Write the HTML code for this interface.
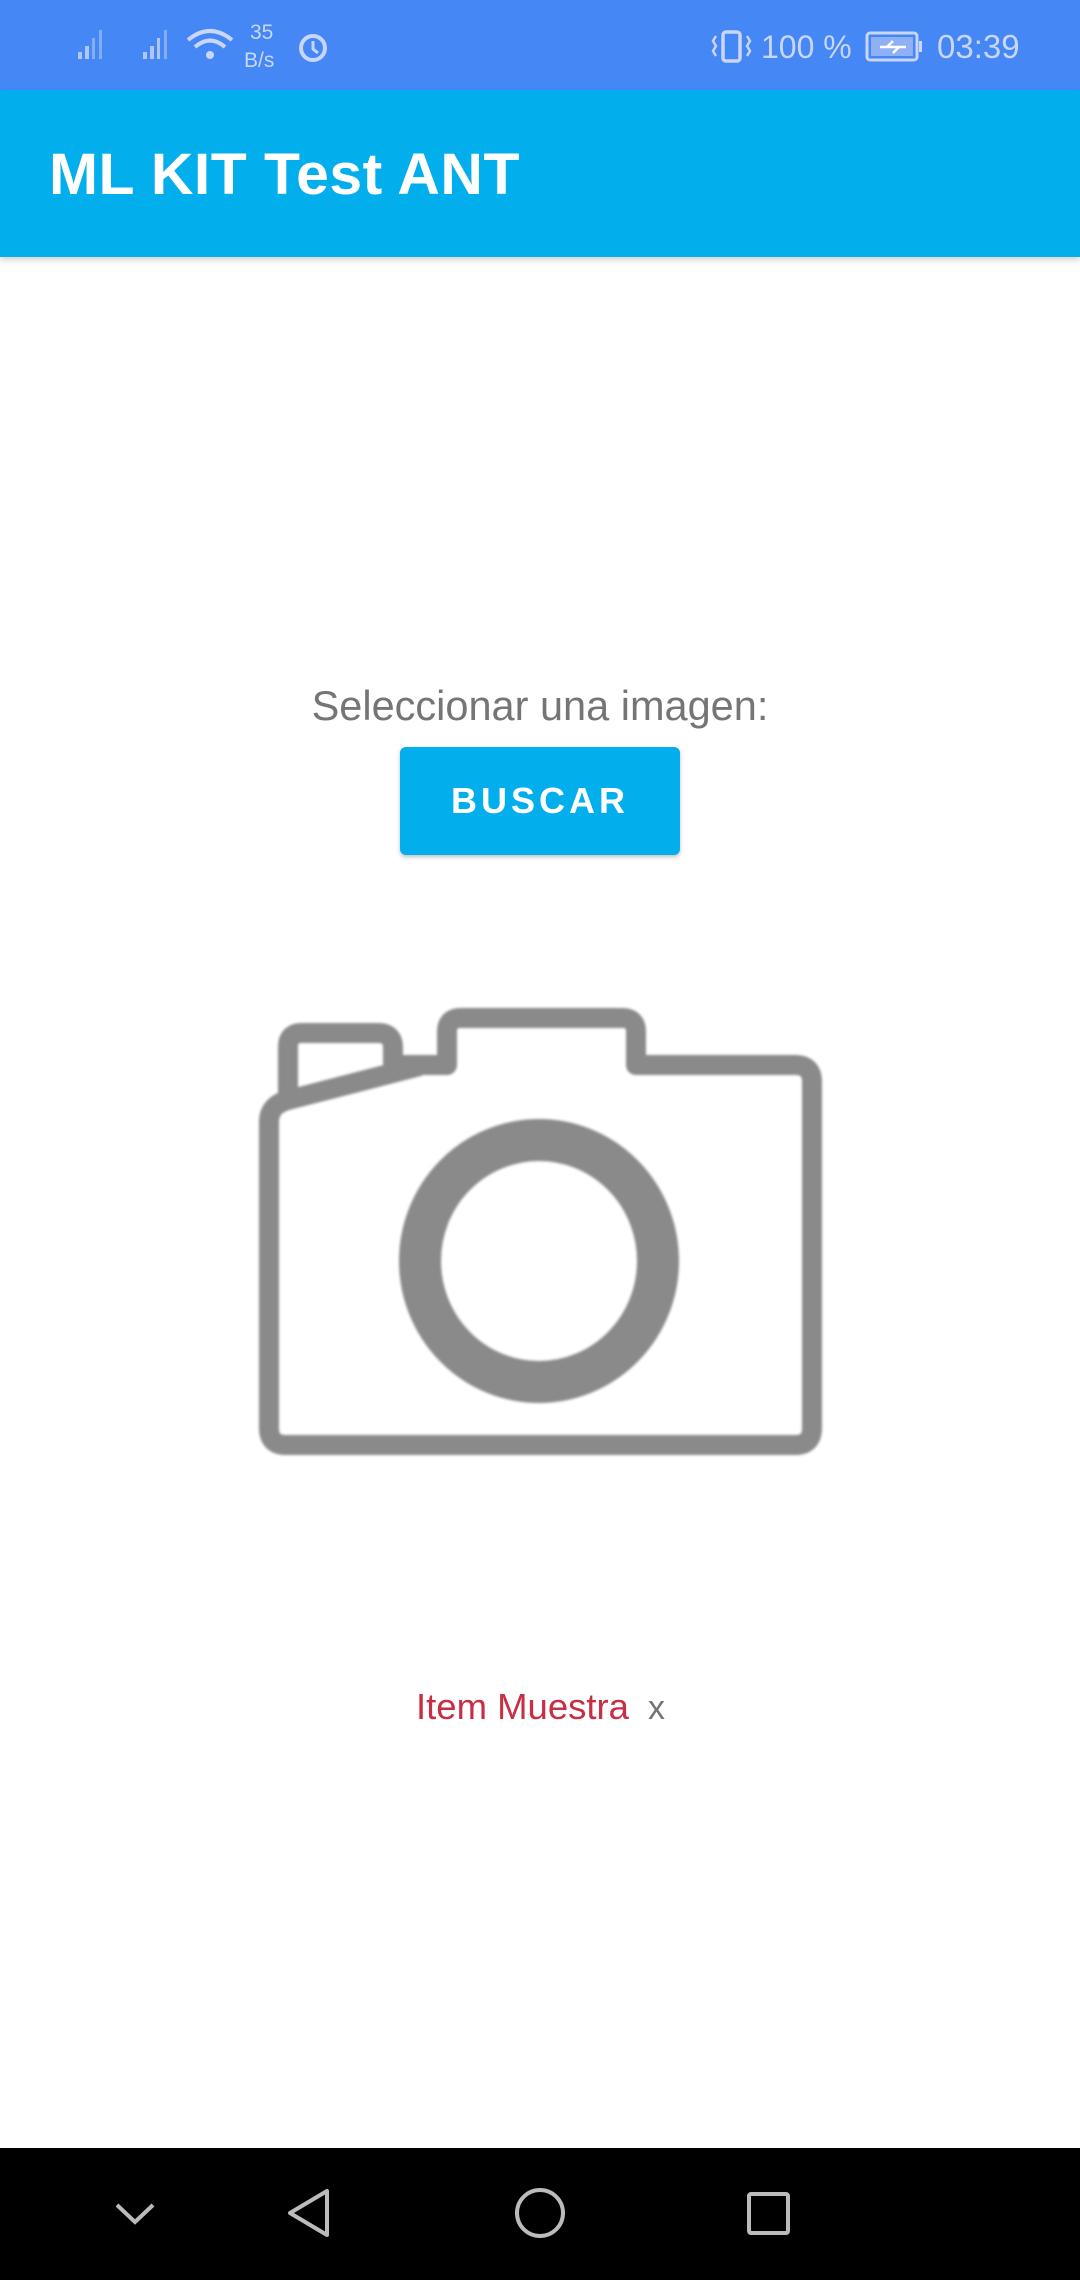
<!DOCTYPE html>
<html><head><meta charset="utf-8"><style>
*{margin:0;padding:0;box-sizing:border-box}
body{width:1080px;height:2280px;background:#fff;position:relative;overflow:hidden;font-family:"Liberation Sans",sans-serif}
.sb{position:absolute;left:0;top:0;width:1080px;height:90px;background:#4487F5;color:#c9d6fa}
.ab{position:absolute;left:0;top:90px;width:1080px;height:167px;background:#03AEEC;box-shadow:0 3px 6px rgba(0,0,0,.18)}
.title{position:absolute;left:49px;font-size:58px;font-weight:700;color:#fff;letter-spacing:0.5px;line-height:1;transform:scaleX(1.015);transform-origin:left}
.t{position:absolute;white-space:nowrap;line-height:1}
.btn{position:absolute;left:400px;top:747px;width:280px;height:108px;background:#03AEEC;border-radius:6px;box-shadow:0 2px 4px rgba(0,0,0,.25);color:#fff;font-size:36px;letter-spacing:4px;text-align:center;line-height:108px;font-weight:700}
.nav{position:absolute;left:0;top:2148px;width:1080px;height:132px;background:#000}
</style></head><body>
<div class="sb">
<svg width="1080" height="90" style="position:absolute;left:0;top:0" fill="#c9d6fa" stroke="#c9d6fa">
<g stroke="none" opacity=".8"><rect x="78" y="52" width="4" height="7"/><rect x="85" y="46" width="4" height="13"/><rect x="92" y="38" width="3" height="21" opacity=".6"/><rect x="99" y="30" width="3" height="29" opacity=".6"/>
<rect x="143" y="52" width="4" height="7"/><rect x="150" y="46" width="4" height="13"/><rect x="157" y="38" width="3" height="21"/><rect x="164" y="30" width="3" height="29" opacity=".6"/></g>
<g fill="none" stroke-width="4"><path d="M188 40 Q210 22 232 40"/><path d="M195 47 Q210 34 225 47"/></g>
<circle cx="210" cy="55" r="4" stroke="none"/>
<text x="250" y="39" font-size="21" stroke="none" font-family="Liberation Sans">35</text>
<text x="244" y="67" font-size="21" stroke="none" font-family="Liberation Sans">B/s</text>
<circle cx="313" cy="48" r="12" fill="none" stroke-width="4"/><path d="M313 41 V49 L318 53" fill="none" stroke-width="3"/>
<rect x="723" y="32" width="17" height="29" rx="3" fill="none" stroke-width="3.5"/>
<path d="M716 36 l-3 5 3 5 -3 5 3 5 M747 36 l3 5 -3 5 3 5 -3 5" fill="none" stroke-width="2.5"/>
<text x="761" y="58" font-size="32" stroke="none" font-family="Liberation Sans">100 %</text>
<rect x="867" y="33" width="50" height="27" rx="3" fill="none" stroke-width="3"/><rect x="871" y="37" width="42" height="19" fill="#8fb0f5" stroke="none"/><rect x="919" y="41" width="3" height="11" stroke="none"/>
<path d="M880 47 H906 M893 41 L887 47 L899 47 L893 53" stroke="#fff" stroke-width="2.5" fill="none"/>
<text x="937" y="58" font-size="33" stroke="none" font-family="Liberation Sans">03:39</text>
</svg>
</div>
<div class="ab"><div class="title" style="top:56px">ML KIT Test ANT</div></div>
<div class="t" style="left:0;width:1080px;text-align:center;top:685px;font-size:41.5px;color:#757575">Seleccionar una imagen:</div>
<div class="btn">BUSCAR</div>
<svg width="1080" height="600" style="position:absolute;left:0;top:960px">
<g transform="translate(0,-960)" fill="none" stroke="#8a8a8a" stroke-width="20" stroke-linejoin="round" style="filter:blur(1.2px)">
<path d="M269 1428 L269 1122 Q269 1105 288 1100 L288 1047 Q288 1033 302 1033 L378 1033 Q393 1033 393 1048 L393 1065 L447 1065 L447 1032 Q447 1018 461 1018 L622 1018 Q636 1018 636 1032 L636 1065 L795 1065 Q812 1065 812 1082 L812 1428 Q812 1445 795 1445 L286 1445 Q269 1445 269 1428 Z"/>
<path d="M288 1100 L420 1066"/>
<ellipse cx="539" cy="1261" rx="119" ry="121" stroke-width="42"/>
</g></svg>
<div class="t" style="left:416px;top:1689px;font-size:36.5px;color:#c62f44">Item Muestra</div>
<div class="t" style="left:648px;top:1691px;font-size:34px;color:#757575">x</div>
<div class="nav">
<svg width="1080" height="132" fill="none" stroke="#bbb" stroke-width="4">
<path d="M117 57 L135 74 L153 57"/>
<path d="M327 43 L327 87 L290 65 Z" stroke-linejoin="round"/>
<circle cx="540" cy="65" r="23"/>
<rect x="749" y="46" width="39" height="39" rx="2"/>
</svg></div>
</body></html>
